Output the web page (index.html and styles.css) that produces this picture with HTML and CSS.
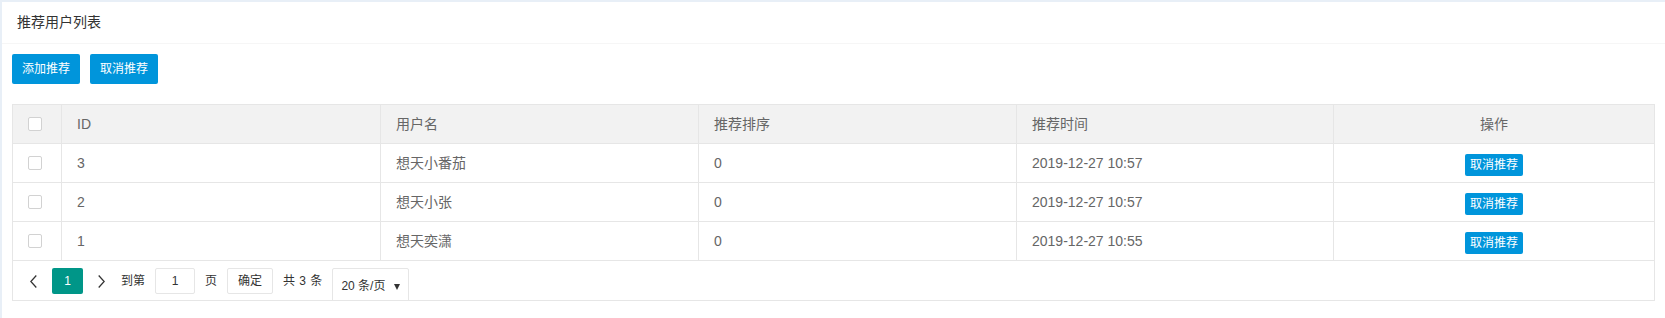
FILE: index.html
```html
<!DOCTYPE html>
<html lang="zh-CN">
<head>
<meta charset="utf-8">
<title>推荐用户列表</title>
<link rel="stylesheet" href="styles.css">
</head>
<body>
<div class="page">
  <div class="card">
    <div class="card-header">推荐用户列表</div>
    <div class="card-body">
      <div class="toolbar">
        <button class="btn">添加推荐</button>
        <button class="btn">取消推荐</button>
      </div>
      <div class="table-box">
        <div class="row head">
          <div class="cell"><span class="check"></span></div>
          <div class="cell">ID</div>
          <div class="cell">用户名</div>
          <div class="cell">推荐排序</div>
          <div class="cell">推荐时间</div>
          <div class="cell center">操作</div>
        </div>
        <div class="row">
          <div class="cell"><span class="check"></span></div>
          <div class="cell">3</div>
          <div class="cell">想天小番茄</div>
          <div class="cell">0</div>
          <div class="cell">2019-12-27 10:57</div>
          <div class="cell action"><button class="btn-xs">取消推荐</button></div>
        </div>
        <div class="row">
          <div class="cell"><span class="check"></span></div>
          <div class="cell">2</div>
          <div class="cell">想天小张</div>
          <div class="cell">0</div>
          <div class="cell">2019-12-27 10:57</div>
          <div class="cell action"><button class="btn-xs">取消推荐</button></div>
        </div>
        <div class="row">
          <div class="cell"><span class="check"></span></div>
          <div class="cell">1</div>
          <div class="cell">想天奕潇</div>
          <div class="cell">0</div>
          <div class="cell">2019-12-27 10:55</div>
          <div class="cell action"><button class="btn-xs">取消推荐</button></div>
        </div>
        <div class="pager">
          <span class="pg-prev"><svg width="7" height="13" viewBox="0 0 7 13"><polyline points="6.3,0.5 0.8,6.5 6.3,12.5" fill="none" stroke="#333" stroke-width="1.3"/></svg></span>
          <span class="pg-cur">1</span>
          <span class="pg-next"><svg width="7" height="13" viewBox="0 0 7 13"><polyline points="0.7,0.5 6.2,6.5 0.7,12.5" fill="none" stroke="#333" stroke-width="1.3"/></svg></span>
          <span class="pg-text">到第</span>
          <span class="pg-input">1</span>
          <span class="pg-text">页</span>
          <span class="pg-btn">确定</span>
          <span class="pg-text pg-count">共 3 条</span>
          <span class="pg-select">20 条/页<i class="caret"></i></span>
        </div>
      </div>
    </div>
  </div>
</div>
</body>
</html>
```

FILE: styles.css
```css
html, body {
  margin: 0;
  padding: 0;
  background: #e8eff7;
  font-family: "Liberation Sans", "Noto Sans CJK SC", sans-serif;
  font-size: 14px;
  color: #666;
}

.page {
  padding: 2px 0 0 2px;
  height: 316px;
}

.card {
  background: #fff;
  height: 100%;
}

.card-header {
  height: 41px;
  line-height: 41px;
  padding: 0 15px;
  border-bottom: 1px solid #f6f6f6;
  color: #333;
  font-size: 14px;
}

.card-body {
  padding: 10px;
}

.toolbar {
  display: flex;
  gap: 10px;
  margin-bottom: 20px;
}

.btn {
  height: 30px;
  padding: 0 10px;
  border: 0;
  border-radius: 2px;
  background: #0095db;
  color: #fff;
  font-family: inherit;
  font-size: 12px;
  line-height: 30px;
}

.table-box {
  border: 1px solid #e6e6e6;
}

.row {
  display: grid;
  grid-template-columns: 49px 319px 318px 318px 317px 1fr;
  border-bottom: 1px solid #e6e6e6;
}

.row.head {
  background: #f2f2f2;
}

.cell {
  height: 20px;
  padding: 9px 15px;
  line-height: 20px;
  border-right: 1px solid #e6e6e6;
  white-space: nowrap;
  display: flex;
  align-items: center;
}

.cell:last-child {
  border-right: 0;
}

.cell.center {
  justify-content: center;
}

.cell.action {
  height: 22px;
  justify-content: center;
  align-items: flex-start;
  padding: 10px 15px 6px;
}

.check {
  display: block;
  width: 12px;
  height: 12px;
  border: 1px solid #d2d2d2;
  border-radius: 2px;
  background: #fff;
}

.btn-xs {
  height: 22px;
  line-height: 22px;
  padding: 0 5px;
  border: 0;
  border-radius: 2px;
  background: #0095db;
  color: #fff;
  font-family: inherit;
  font-size: 12px;
}

.pager {
  display: flex;
  align-items: flex-start;
  height: 32px;
  padding: 7px 7px 0;
  overflow: hidden;
  font-size: 12px;
  color: #333;
}

.pg-prev {
  width: 22px;
  padding-left: 10px;
  height: 26px;
  display: flex;
  align-items: center;
}

.pg-next {
  width: 7px;
  padding: 0 16px 0 15px;
  height: 26px;
  display: flex;
  align-items: center;
}

.pg-cur {
  width: 31px;
  height: 26px;
  line-height: 26px;
  text-align: center;
  background: #009688;
  color: #fff;
  border-radius: 2px;
}

.pg-text {
  line-height: 26px;
  margin-right: 10px;
}

.pg-count {
  word-spacing: 1px;
  margin-right: 10px;
}

.pg-input {
  box-sizing: border-box;
  width: 40px;
  height: 26px;
  line-height: 24px;
  text-align: center;
  border: 1px solid #e6e6e6;
  border-radius: 2px;
  margin-right: 10px;
}

.pg-btn {
  box-sizing: border-box;
  width: 46px;
  height: 26px;
  line-height: 24px;
  text-align: center;
  border: 1px solid #e6e6e6;
  border-radius: 2px;
  margin-right: 10px;
}

.pg-select {
  position: relative;
  box-sizing: border-box;
  width: 77px;
  height: 34px;
  padding: 2px 0 0 8px;
  line-height: 30px;
  border: 1px solid #e6e6e6;
  border-radius: 2px;
  font-size: 12px;
}

.caret {
  position: absolute;
  right: 8px;
  top: 15px;
  width: 0;
  height: 0;
  border-left: 3px solid transparent;
  border-right: 3px solid transparent;
  border-top: 6px solid #333;
}
```
